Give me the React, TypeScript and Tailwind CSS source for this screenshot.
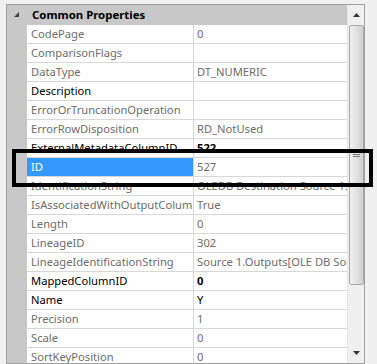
import React from "react";

type Row = { n: string; v: string; nb?: boolean; vb?: boolean; vbold?: boolean; sel?: boolean };

const rows: Row[] = [
  { n: "CodePage", v: "0" },
  { n: "ComparisonFlags", v: "" },
  { n: "DataType", v: "DT_NUMERIC" },
  { n: "Description", v: "", nb: true },
  { n: "ErrorOrTruncationOperation", v: "" },
  { n: "ErrorRowDisposition", v: "RD_NotUsed" },
  { n: "ExternalMetadataColumnID", v: "522", nb: true, vb: true, vbold: true },
  { n: "ID", v: "527", sel: true },
  { n: "IdentificationString", v: "OLEDB Destination Source 1.Inputs" },
  { n: "IsAssociatedWithOutputColumn", v: "True" },
  { n: "Length", v: "0" },
  { n: "LineageID", v: "302" },
  { n: "LineageIdentificationString", v: "Source 1.Outputs[OLE DB Source Output]" },
  { n: "MappedColumnID", v: "0", nb: true, vb: true, vbold: true },
  { n: "Name", v: "Y", nb: true, vb: true },
  { n: "Precision", v: "1" },
  { n: "Scale", v: "0" },
  { n: "SortKeyPosition", v: "0" },
];

export default function App() {
  return (
    <div
      className="relative w-[377px] h-[364px] bg-[#f0f0f0] overflow-hidden text-[11.2px]"
      style={{ fontFamily: '"Noto Sans", "Open Sans", sans-serif' }}
    >
      <div className="absolute left-[6px] top-[4px] w-[359px] h-[360px] border border-[#a0a0a0] bg-white flex overflow-hidden">
        <div className="flex-1 flex flex-col min-w-0">
          <div className="h-[20px] shrink-0 bg-[#c8c8c8] flex items-center">
            <div className="w-[20px] h-full flex items-center justify-center">
              <svg width="6" height="6" viewBox="0 0 6 6">
                <polygon points="5,0 5,5 0,5" fill="#3c3c3c" />
              </svg>
            </div>
            <div className="pl-[5px] font-bold text-black text-[11.4px]">Common Properties</div>
          </div>
          {rows.map((r) => (
            <div key={r.n} className="h-[19px] shrink-0 flex">
              <div className="w-[20px] shrink-0 bg-[#c8c8c8]" />
              <div className="w-[167px] shrink-0 border-b border-r border-[#d8d8d8] bg-white overflow-hidden">
                <div
                  className={
                    "h-full flex items-center pl-[4px] whitespace-nowrap " +
                    (r.sel ? "bg-[#3399ff] text-white" : r.nb ? "text-black" : "text-[#6d6d6d]")
                  }
                >
                  {r.n}
                </div>
              </div>
              <div
                className={
                  "flex-1 min-w-0 border-b border-[#d8d8d8] flex items-center pl-[3px] whitespace-nowrap overflow-hidden " +
                  (r.vb ? "text-black " : "text-[#6d6d6d] ") +
                  (r.vbold ? "font-bold" : "")
                }
              >
                {r.v}
              </div>
            </div>
          ))}
        </div>
        <div className="w-[17px] shrink-0 bg-[#f0f0f0] border-l border-[#e6e6e6] flex flex-col items-center">
          <div className="h-[20px] w-full flex items-center justify-center">
            <svg width="7" height="4" viewBox="0 0 7 4">
              <polygon points="3.5,0 7,4 0,4" fill="#333" />
            </svg>
          </div>
          <div className="w-[15px] h-[260px] rounded-[2px] border border-[#a8a8a8] bg-gradient-to-r from-[#f0f0f0] via-[#e2e2e2] to-[#d0d0d0] flex items-center justify-center">
            <svg width="7" height="6" viewBox="0 0 7 6">
              <rect x="0" y="0" width="7" height="1" fill="#7a7a7a" />
              <rect x="0" y="2" width="7" height="1" fill="#7a7a7a" />
              <rect x="0" y="4" width="7" height="1" fill="#7a7a7a" />
            </svg>
          </div>
          <div className="flex-1" />
          <div className="h-[20px] w-full flex items-center justify-center">
            <svg width="7" height="4" viewBox="0 0 7 4">
              <polygon points="0,0 7,0 3.5,4" fill="#333" />
            </svg>
          </div>
        </div>
      </div>
      <div className="absolute left-[12px] top-[149px] w-[361px] h-[38px] border-[4px] border-black" />
    </div>
  );
}
